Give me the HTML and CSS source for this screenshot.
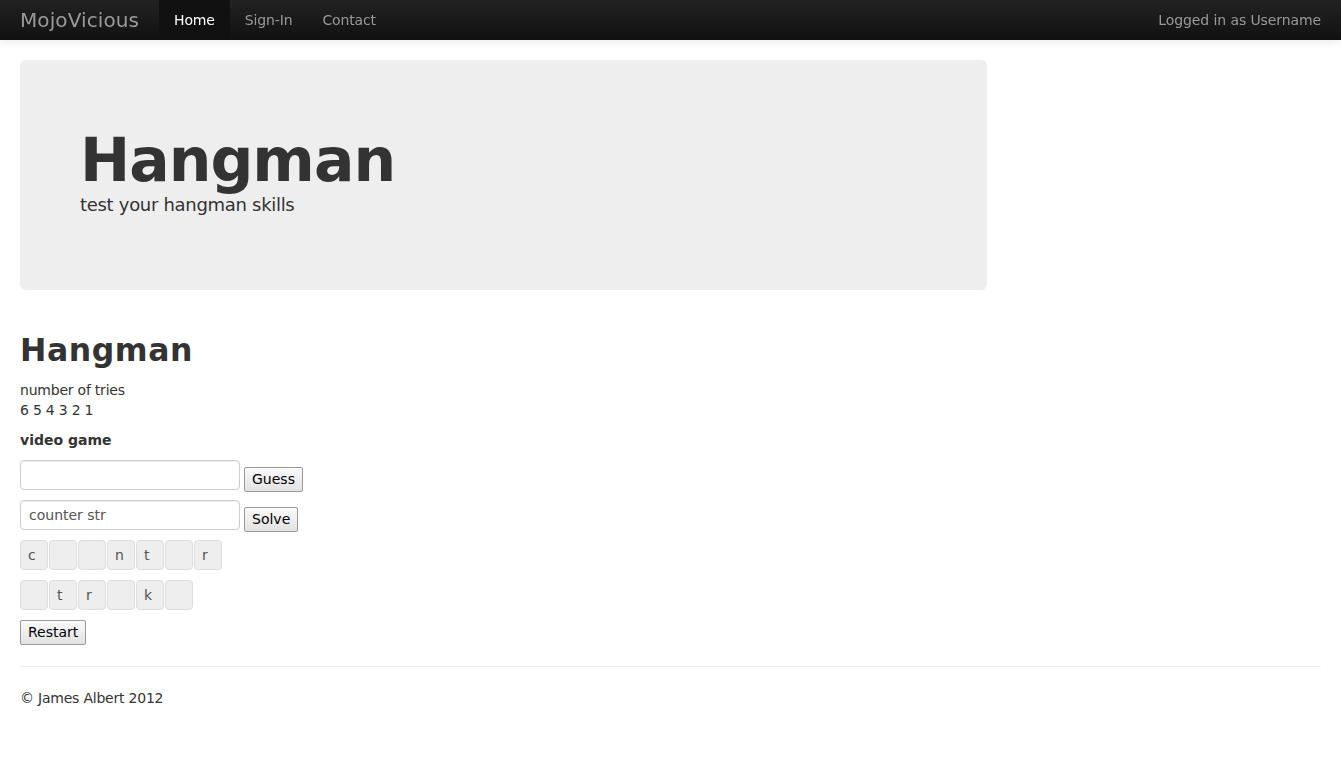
FILE: index.html
```html
<!DOCTYPE html>
<html lang="en">
<head>
<meta charset="utf-8">
<title>Hangman</title>
<link rel="stylesheet" href="styles.css">
</head>
<body>
<div class="navbar">
  <div class="navbar-inner">
    <a class="brand" href="#">MojoVicious</a>
    <ul class="nav">
      <li class="active"><a href="#">Home</a></li>
      <li><a href="#">Sign-In</a></li>
      <li><a href="#">Contact</a></li>
    </ul>
    <p class="navbar-text">Logged in as Username</p>
  </div>
</div>

<div class="container">
  <div class="row">
    <div class="hero">
      <h1>Hangman</h1>
      <p>test your hangman skills</p>
    </div>
  </div>

  <h2>Hangman</h2>
  <p class="tries">number of tries<br>6 5 4 3 2 1</p>
  <p class="category">video game</p>

  <form class="form-row">
    <input type="text" class="text-input">
    <button type="button" class="btn">Guess</button>
  </form>
  <form class="form-row">
    <input type="text" class="text-input" value="counter str">
    <button type="button" class="btn">Solve</button>
  </form>

  <div class="letters">
    <span class="letter">c</span><span class="letter"></span><span class="letter"></span><span class="letter">n</span><span class="letter">t</span><span class="letter"></span><span class="letter">r</span>
  </div>
  <div class="letters">
    <span class="letter"></span><span class="letter">t</span><span class="letter">r</span><span class="letter"></span><span class="letter">k</span><span class="letter"></span>
  </div>

  <button type="button" class="btn restart">Restart</button>

  <hr>
  <footer class="footer">
    <p>© James Albert 2012</p>
  </footer>
</div>
</body>
</html>
```

FILE: styles.css
```css
* { box-sizing: border-box; }

html, body {
  margin: 0;
  padding: 0;
}

body {
  font-family: "DejaVu Sans", sans-serif;
  font-size: 14px;
  line-height: 20px;
  color: #333;
  background: #fff;
  padding-top: 60px;
}

p { margin: 0 0 10px; }

a { text-decoration: none; }

/* Navbar */
.navbar {
  position: fixed;
  top: 0;
  left: 0;
  right: 0;
  z-index: 10;
}

.navbar-inner {
  height: 40px;
  padding: 0 20px;
  display: flex;
  align-items: stretch;
  background: linear-gradient(to bottom, #222, #111);
  box-shadow: 0 1px 10px rgba(0,0,0,0.1);
}

.brand {
  display: block;
  padding: 10px 20px 10px 0;
  font-size: 20px;
  line-height: 20px;
  letter-spacing: 0.1px;
  color: #999;
  text-shadow: 0 1px 0 #222;
}

.nav {
  display: flex;
  list-style: none;
  margin: 0;
  padding: 0;
}

.nav a {
  display: block;
  padding: 10px 15px;
  line-height: 20px;
  letter-spacing: -0.15px;
  color: #999;
}

.nav .active a {
  color: #fff;
  background: #111;
}

.navbar-text {
  margin: 0 0 0 auto;
  line-height: 40px;
  letter-spacing: -0.1px;
  color: #999;
}

/* Layout */
.container {
  padding: 0 20px;
}

.row {
  display: flex;
}

.hero {
  width: 74.358974%;
  padding: 60px;
  margin-bottom: 30px;
  background: #eee;
  border-radius: 6px;
}

.hero h1 {
  margin: 10px 0 0;
  font-size: 60px;
  line-height: 1;
  letter-spacing: -1px;
  font-weight: bold;
  color: #333;
}

.hero p {
  font-size: 18px;
  line-height: 30px;
  letter-spacing: -0.3px;
  margin: 0 0 10px;
  color: #333;
}

h2 {
  margin: 10px 0;
  font-size: 31.5px;
  line-height: 40px;
  letter-spacing: 0.55px;
  font-weight: bold;
}

.tries, .footer p {
  letter-spacing: -0.22px;
}

.category {
  font-weight: bold;
}

/* Forms */
.form-row {
  display: flex;
  align-items: flex-start;
  gap: 4px;
  margin: 0;
}

.text-input {
  width: 220px;
  height: 30px;
  padding: 4px 8px;
  margin-bottom: 10px;
  font-family: "DejaVu Sans", sans-serif;
  font-size: 14px;
  line-height: 20px;
  color: #555;
  background: #fff;
  border: 1px solid #ccc;
  border-radius: 4px;
  box-shadow: inset 0 1px 1px rgba(0,0,0,0.075);
  outline: none;
}

.btn {
  height: 25px;
  padding: 1px 7px;
  margin-top: 7px;
  font-family: "DejaVu Sans", sans-serif;
  font-size: 14px;
  line-height: 21px;
  color: #000;
  background: linear-gradient(to bottom, #fafafa, #e2e2e2);
  border: 1px solid #9a9a9a;
  border-radius: 2px;
  cursor: pointer;
}

.letters {
  display: flex;
  gap: 1px;
  margin-bottom: 10px;
}

.letter {
  display: block;
  width: 28px;
  height: 30px;
  padding: 4px 7px;
  line-height: 20px;
  color: #555;
  background: #eee;
  border: 1px solid #ddd;
  border-radius: 4px;
}

.restart {
  display: block;
  margin-top: 0;
}

hr {
  margin: 21px 0 20px;
  border: 0;
  border-top: 1px solid #eee;
  border-bottom: 1px solid #fff;
}

.footer p {
  margin: 0 0 10px;
}
```
